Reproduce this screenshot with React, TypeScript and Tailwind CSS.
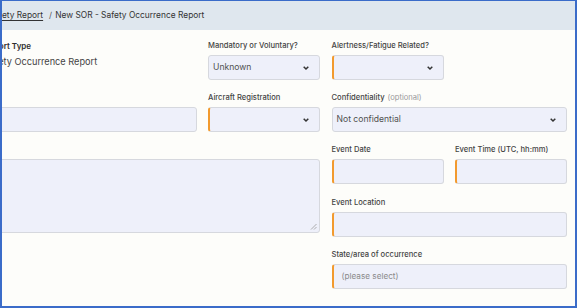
import React from 'react';

const Chevron: React.FC = () => (
  <svg width="8" height="6" viewBox="0 0 8 6" className="shrink-0">
    <polyline points="1.7,1.7 4,4 6.3,1.7" fill="none" stroke="#333" strokeWidth="1.5" />
  </svg>
);

const Label: React.FC<{ text: string; hint?: string }> = ({ text, hint }) => (
  <div className="h-[16px] mb-[1px] text-[7.6px] leading-[16px] font-medium text-[#444] whitespace-nowrap">
    {text}
    {hint && <span className="ml-[3px] font-normal text-[#9a9a9a]">{hint}</span>}
  </div>
);

const Field: React.FC<{ required?: boolean; select?: boolean; value?: string; placeholder?: string }> = ({
  required,
  select,
  value,
  placeholder,
}) => (
  <div
    className={`flex items-center h-[25px] rounded-[3px] border border-[#d6d8de] bg-[#eef0fa] pr-[9px] ${
      required ? 'border-l-2 border-l-[#f29a2e]' : ''
    }`}
  >
    {value && <span className="flex-1 pl-[4px] text-[8.6px] text-[#505050] truncate">{value}</span>}
    {placeholder && <span className="flex-1 pl-[8px] text-[8.2px] text-[#8a8a8a]">{placeholder}</span>}
    {!value && !placeholder && <span className="flex-1" />}
    {select && <Chevron />}
  </div>
);

const App: React.FC = () => {
  return (
    <div
      className="w-[577px] h-[308px] overflow-hidden bg-[#fdfdfa] border-t border-l-2 border-r-2 border-b-2 border-[#3b6cc9]"
      style={{ fontFamily: 'Inter, "Noto Sans", sans-serif' }}
    >
      {/* Breadcrumb */}
      <div className="h-[29px] bg-[#dfe7ee] flex items-center">
        <div className="-ml-[13px] text-[8.4px] text-[#333] whitespace-nowrap">
          <span className="underline underline-offset-2">Safety Report</span>
          <span className="ml-[6px] mr-[3px] text-[#555]">/</span>
          <span>New SOR - Safety Occurrence Report</span>
        </div>
      </div>

      {/* Form */}
      <div className="-ml-[22px] pt-[8px] grid grid-cols-[93px_112px_112px_112px_112px] gap-x-[11.5px] gap-y-[10px]">
        {/* Row 1 */}
        <div className="col-span-2 pl-[4px]">
          <div className="h-[16px] mb-[1px] text-[8px] leading-[16px] font-semibold text-[#2e2e2e]">Report Type</div>
          <div className="text-[9.2px] text-[#444]">Safety Occurrence Report</div>
        </div>
        <div>
          <Label text="Mandatory or Voluntary?" />
          <Field select value="Unknown" />
        </div>
        <div>
          <Label text="Alertness/Fatigue Related?" />
          <Field select required />
        </div>
        <div />

        {/* Row 2 */}
        <div className="col-span-2">
          <Label text="" />
          <Field />
        </div>
        <div>
          <Label text="Aircraft Registration" />
          <Field select required />
        </div>
        <div className="col-span-2">
          <Label text="Confidentiality" hint="(optional)" />
          <Field select value="Not confidential" />
        </div>

        {/* Row 3-4 */}
        <div className="col-span-3 row-span-2">
          <Label text="" />
          <div className="relative h-[74px] rounded-[3px] border border-[#d6d8de] bg-[#eef0fa]">
            <svg width="7" height="7" viewBox="0 0 7 7" className="absolute right-[2px] bottom-[2px]">
              <line x1="1" y1="6.5" x2="6.5" y2="1" stroke="#999" strokeWidth="0.8" />
              <line x1="4" y1="6.5" x2="6.5" y2="4" stroke="#999" strokeWidth="0.8" />
            </svg>
          </div>
        </div>
        <div>
          <Label text="Event Date" />
          <Field required />
        </div>
        <div>
          <Label text="Event Time (UTC, hh:mm)" />
          <Field required />
        </div>
        <div className="col-span-2 pt-[1px]">
          <Label text="Event Location" />
          <Field required />
        </div>

        {/* Row 5 */}
        <div className="col-span-3" />
        <div className="col-span-2">
          <Label text="State/area of occurrence" />
          <Field required placeholder="(please select)" />
        </div>
      </div>
    </div>
  );
};

export default App;
